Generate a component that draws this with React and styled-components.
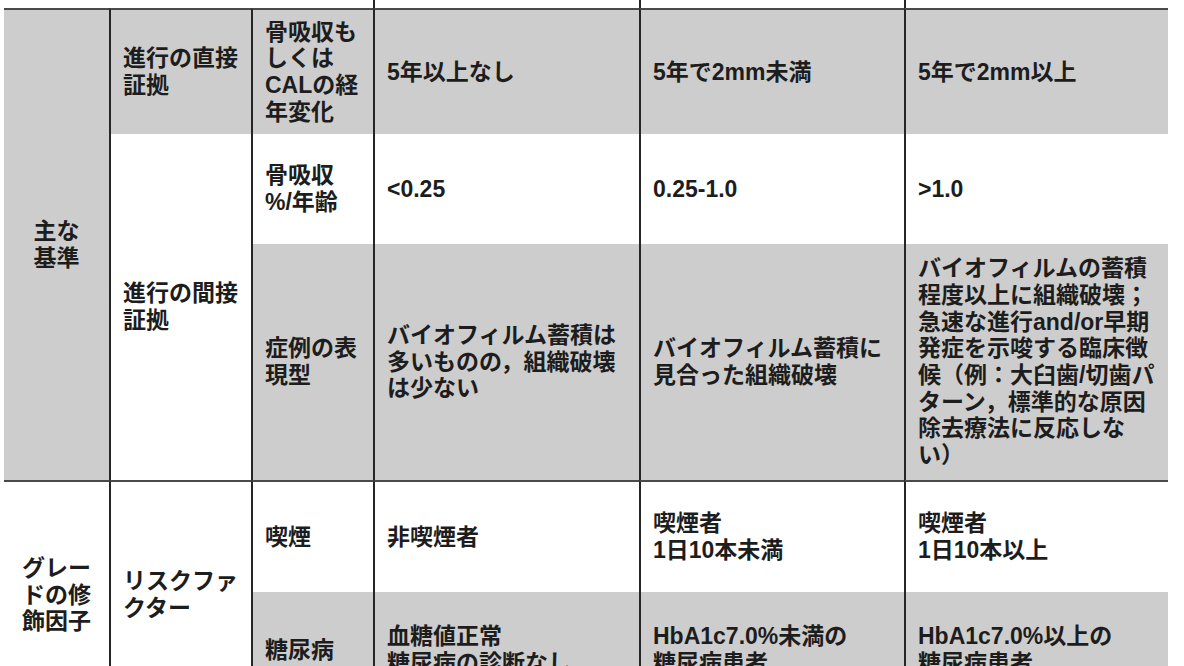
import React from 'react'
import styled, { createGlobalStyle } from 'styled-components'

const GlobalStyle = createGlobalStyle`
    html, body {
        margin: 0;
        padding: 0;
        background: #ffffff;
        overflow: hidden;
    }
    body {
        font-family: "Liberation Sans", "Noto Sans CJK JP", sans-serif;
    }
`

const Page = styled.div`
    padding-left: 4px;
`

const Grid = styled.div`
    display: grid;
    grid-template-columns: 105px 142px 122px 266px 265px 264px;
    grid-template-rows: 8px 126px 110px 236px 112px 116px;
    width: 1164px;
`

const Cell = styled.div`
    box-sizing: border-box;
    display: flex;
    align-items: center;
    justify-content: ${(p) => (p.$center ? 'center' : 'flex-start')};
    text-align: ${(p) => (p.$center ? 'center' : 'left')};
    padding: 0 12px;
    background: ${(p) => (p.$gray ? '#cdcdcd' : '#ffffff')};
    border-left: ${(p) => (p.$first ? 'none' : '2px solid #262626')};
    border-top: ${(p) => (p.$top ? '2px solid #4a4a4a' : 'none')};
    color: #1d1d1d;
    font-size: 23px;
    line-height: 26.7px;
    font-weight: 700;
    white-space: nowrap;
    grid-column: ${(p) => p.$col || 'auto'};
    grid-row: ${(p) => p.$row || 'auto'};
`

function Lines({ text }) {
    const parts = text.split('\n')
    return (
        <span>
            {parts.map((line, i) => (
                <React.Fragment key={i}>
                    {line}
                    {i < parts.length - 1 && <br />}
                </React.Fragment>
            ))}
        </span>
    )
}

const rows = [
    {
        row: 2,
        gray: true,
        top: true,
        cells: [
            '骨吸収も\nしくは\nCALの経\n年変化',
            '5年以上なし',
            '5年で2mm未満',
            '5年で2mm以上',
        ],
    },
    {
        row: 3,
        gray: false,
        cells: ['骨吸収\n%/年齢', '<0.25', '0.25-1.0', '>1.0'],
    },
    {
        row: 4,
        gray: true,
        cells: [
            '症例の表\n現型',
            'バイオフィルム蓄積は\n多いものの，組織破壊\nは少ない',
            'バイオフィルム蓄積に\n見合った組織破壊',
            'バイオフィルムの蓄積\n程度以上に組織破壊；\n急速な進行and/or早期\n発症を示唆する臨床徴\n候（例：大臼歯/切歯パ\nターン，標準的な原因\n除去療法に反応しな\nい）',
        ],
    },
    {
        row: 5,
        gray: false,
        top: true,
        cells: ['喫煙', '非喫煙者', '喫煙者\n1日10本未満', '喫煙者\n1日10本以上'],
    },
    {
        row: 6,
        gray: true,
        cells: [
            '糖尿病',
            '血糖値正常\n糖尿病の診断なし',
            'HbA1c7.0%未満の\n糖尿病患者',
            'HbA1c7.0%以上の\n糖尿病患者',
        ],
    },
]

export default function App() {
    return (
        <>
            <GlobalStyle />
            <Page>
                <Grid>
                    {/* tail of the header row above */}
                    <Cell $first $col="1 / 4" $row="1" />
                    <Cell $col="4" $row="1" />
                    <Cell $col="5" $row="1" />
                    <Cell $col="6" $row="1" />

                    <Cell $first $center $gray $top $col="1" $row="2 / 5">
                        <Lines text={'主な\n基準'} />
                    </Cell>
                    <Cell $gray $top $col="2" $row="2">
                        <Lines text={'進行の直接\n証拠'} />
                    </Cell>
                    <Cell $col="2" $row="3 / 5">
                        <Lines text={'進行の間接\n証拠'} />
                    </Cell>

                    <Cell $first $center $top $col="1" $row="5 / 7">
                        <Lines text={'グレー\nドの修\n飾因子'} />
                    </Cell>
                    <Cell $top $col="2" $row="5 / 7">
                        <Lines text={'リスクファ\nクター'} />
                    </Cell>

                    {rows.map((r) =>
                        r.cells.map((c, i) => (
                            <Cell
                                key={`${r.row}-${i}`}
                                $gray={r.gray}
                                $top={r.top}
                                $col={String(i + 3)}
                                $row={String(r.row)}
                            >
                                <Lines text={c} />
                            </Cell>
                        ))
                    )}
                </Grid>
            </Page>
        </>
    )
}
